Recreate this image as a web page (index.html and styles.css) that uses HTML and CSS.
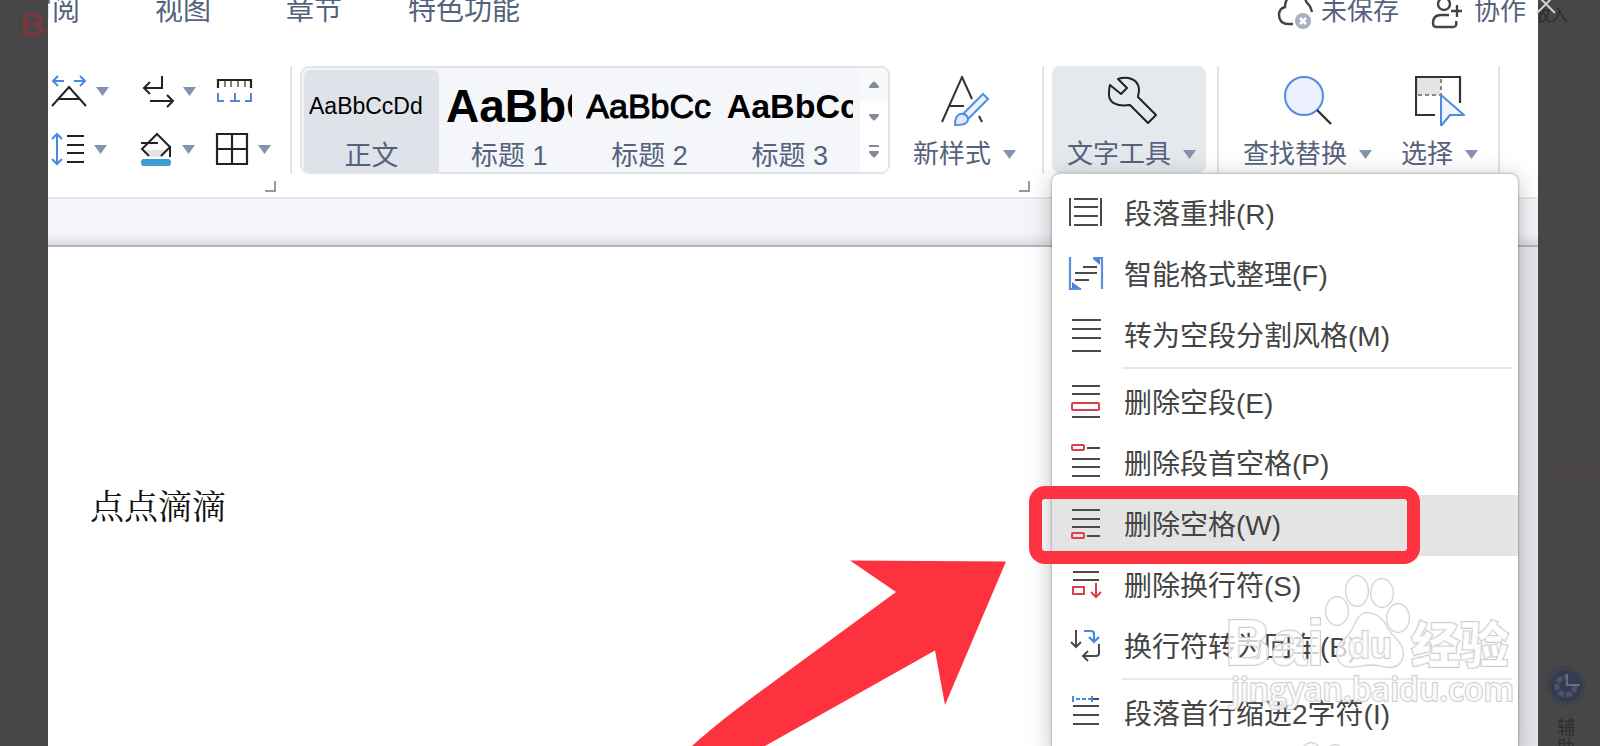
FILE: index.html
```html
<!DOCTYPE html>
<html lang="zh-CN">
<head>
<meta charset="utf-8">
<title>删除空格</title>
<link rel="stylesheet" href="styles.css">
</head>
<body>
<div class="viewer">
  <aside class="side side-left"><span class="side-logo">Bai</span></aside>

  <main class="app">
    <header class="topbar">
      <nav class="tabs">
        <button class="tab">审阅</button>
        <button class="tab">视图</button>
        <button class="tab">章节</button>
        <button class="tab tab-wide">特色功能</button>
      </nav>
      <div class="status">
        <button class="status-item status-save">
          <svg width="38" height="34" viewBox="0 0 38 34" fill="none"><path d="M16 28H11C5 28 2 24 2 19c0-4 2-7 6-8C8 3 13-2 19-2c6 0 9 4 11 9 3 2 4 5 5 9" stroke="#444" stroke-width="2.4"/><circle cx="26" cy="25" r="8" fill="#a9afbd"/><path d="M23 22l6 6M29 22l-6 6" stroke="#fff" stroke-width="2.6"/></svg>
          <span>未保存</span>
        </button>
        <button class="status-item status-share">
          <svg width="32" height="34" viewBox="0 0 32 34" fill="none" stroke="#444" stroke-width="2.4"><circle cx="13" cy="8" r="6"/><path d="M18 19H10C5 19 2 22 2 27c0 3 1 4 3 4h17c3 0 4-2 3-6M26 9v12M20 15h11"/></svg>
          <span>协作</span>
        </button>
      </div>
    </header>

    <section class="ribbon">
      <div class="group group-para">
        <div class="para-grid">
          <button class="small-btn" aria-label="字符缩放">
            <svg width="36" height="34" viewBox="0 0 36 34" fill="none" stroke-width="2"><path d="M1 32L18 13l17 19M7 25h22" stroke="#222"/><path d="M13 7H2M7 2L2 7l5 5M23 7h11M29 2l5 5-5 5" stroke="#4a88e0"/></svg>
            <svg class="caret" width="13" height="9" viewBox="0 0 13 9"><path d="M0 0h13L6.500 9z"/></svg>
          </button>
          <button class="small-btn" aria-label="换行">
            <svg width="34" height="34" viewBox="0 0 34 34" fill="none" stroke="#222" stroke-width="2"><path d="M22 2v12H4M10 8l-6 6 6 6M10 27h23M27 21l6 6-6 6"/></svg>
            <svg class="caret" width="13" height="9" viewBox="0 0 13 9"><path d="M0 0h13L6.500 9z"/></svg>
          </button>
          <button class="small-btn" aria-label="标尺">
            <svg width="38" height="28" viewBox="0 0 38 28" fill="none"><path d="M3 11V3h33v8" stroke="#222" stroke-width="2.200"/><path d="M10 4v6M16 4v6M23 4v6M30 4v6" stroke="#555" stroke-width="1.500"/><path d="M3 16v8h6M20 16v8M15 24h10M36 16v8h-6" stroke="#4f86e0" stroke-width="2"/></svg>
          </button>
          <button class="small-btn" aria-label="行距">
            <svg width="34" height="34" viewBox="0 0 34 34" fill="none" stroke-width="2"><path d="M6 2v30M1 7l5-5 5 5M1 27l5 5 5-5" stroke="#4a88e0"/><path d="M16 4h17M16 13h17M16 21h17M16 30h17" stroke="#222" stroke-width="2.200"/></svg>
            <svg class="caret" width="13" height="9" viewBox="0 0 13 9"><path d="M0 0h13L6.500 9z"/></svg>
          </button>
          <button class="small-btn" aria-label="底纹">
            <svg width="33" height="34" viewBox="0 0 33 34" fill="none"><path d="M4 18h24l-6 7H10z" fill="#e4e4e6"/><path d="M9 24l-7-7L17 2l13 13-9 9M1 11h17M30 14v11" stroke="#222" stroke-width="2"/><rect x="1" y="27" width="30" height="7" rx="3" fill="#3d9bd6"/></svg>
            <svg class="caret" width="13" height="9" viewBox="0 0 13 9"><path d="M0 0h13L6.500 9z"/></svg>
          </button>
          <button class="small-btn" aria-label="边框">
            <svg width="34" height="34" viewBox="0 0 34 34" fill="none" stroke="#222" stroke-width="2.200"><path d="M2 2h30v30H2zM17 2v30M2 17h30"/></svg>
            <svg class="caret" width="13" height="9" viewBox="0 0 13 9"><path d="M0 0h13L6.500 9z"/></svg>
          </button>
        </div>
        <span class="corner"></span>
      </div>

      <div class="group group-style">
        <div class="style-row">
          <div class="gallery">
            <button class="card card-on"><span class="sample sample-body">AaBbCcDd</span><span class="card-name">正文</span></button>
            <button class="card"><span class="sample sample-h1">AaBbC</span><span class="card-name">标题 1</span></button>
            <button class="card"><span class="sample sample-h2">AaBbCc</span><span class="card-name">标题 2</span></button>
            <button class="card"><span class="sample sample-h3">AaBbCc</span><span class="card-name">标题 3</span></button>
            <div class="scroller">
              <button class="scroll-btn scroll-up" aria-label="上一行"><svg width="10" height="7" viewBox="0 0 10 7"><path d="M0 6q0-1 4-5 1-1 2 0 4 4 4 5 0 1-1 1H1Q0 7 0 6z" fill="#838a97"/></svg></button>
              <button class="scroll-btn" aria-label="下一行"><svg width="10" height="7" viewBox="0 0 10 7"><path d="M0 1q0 1 4 5 1 1 2 0 4-4 4-5 0-1-1-1H1Q0 0 0 1z" fill="#838a97"/></svg></button>
              <button class="scroll-btn" aria-label="更多"><svg width="12" height="13" viewBox="0 0 12 13"><path d="M1 0h10v2H1zM1 7q0 1 4 5 1 1 2 0 4-4 4-5 0-1-1-1H2Q1 6 1 7z" fill="#838a97"/></svg></button>
            </div>
          </div>
          <button class="big-btn">
            <svg width="50" height="50" viewBox="0 0 50 50" fill="none"><path d="M2 46L22 1l10 22M10 30h14M39 40l3 6" stroke="#333" stroke-width="2"/><path d="M43 18l5 5-20 20-5-5z" fill="#edf3fd" stroke="#4f8fe8" stroke-width="2"/><path d="M15 49c0-8 3-12 8-11 5 1 6 5 4 8-2 3-6 3-12 3z" fill="#dfeafb" stroke="#4f8fe8" stroke-width="2"/></svg>
            <span class="big-label">新样式<svg class="caret" width="13" height="9" viewBox="0 0 13 9"><path d="M0 0h13L6.500 9z"/></svg></span>
          </button>
        </div>
        <span class="corner"></span>
      </div>

      <div class="group group-tool">
        <button class="big-btn big-btn-on" aria-expanded="true">
          <svg width="50" height="50" viewBox="0 0 50 50" fill="none"><path d="M3 9l11 9 6-6-9-9c8-3 20-1 21 10 0 4-1 6-1 8l18 18-8 8-18-18C9 31 2 26 2 19c0-4 0-7 1-10z" stroke="#222" stroke-width="2" stroke-linejoin="round"/></svg>
          <span class="big-label">文字工具<svg class="caret" width="13" height="9" viewBox="0 0 13 9"><path d="M0 0h13L6.500 9z"/></svg></span>
        </button>

        <div class="menu" role="menu">
          <button class="item" role="menuitem"><svg class="ico" viewBox="0 0 36 36"><path class="k" d="M2 4v28M33 4v28M6 5h24M6 13h24M6 22h24M6 31h24"/></svg>段落重排(R)</button>
          <button class="item" role="menuitem"><svg class="ico" viewBox="0 0 36 36"><path class="k" d="M15 12h14M7 18h22M7 25h14"/><path d="M2 2v32h11M25 3h9v31" fill="none" stroke="#5b8fdc" stroke-width="2.200"/><path d="M4 27v6h8zM25 4h7v6z" fill="#4a82d6"/></svg>智能格式整理(F)</button>
          <button class="item" role="menuitem"><svg class="ico" viewBox="0 0 36 36"><path class="k" d="M4 4h29M4 13h29M4 22h29M4 35h29"/></svg>转为空段分割风格(M)</button>
          <hr class="rule">
          <button class="item" role="menuitem"><svg class="ico" viewBox="0 0 36 36"><path class="k" d="M4 3h28M4 11h28M4 34h28"/><rect class="r" x="4" y="20" width="27" height="7" rx="1"/></svg>删除空段(E)</button>
          <button class="item" role="menuitem"><svg class="ico" viewBox="0 0 36 36"><path class="k" d="M19 4h13M4 15h28M4 23h28M4 32h28"/><rect class="r" x="4" y="1" width="12" height="5" rx="1"/></svg>删除段首空格(P)</button>
          <button class="item item-on" role="menuitem"><svg class="ico" viewBox="0 0 36 36"><path class="k" d="M4 5h28M4 14h28M4 22h28M19 31h13"/><rect class="r" x="4" y="28" width="12" height="5" rx="1"/></svg>删除空格(W)<span class="mark"></span></button>
          <button class="item" role="menuitem"><svg class="ico" viewBox="0 0 36 36"><path class="k" d="M5 6h26M5 14h26"/><path class="r" d="M28 17v14M23 26l5 5 5-5"/><rect class="r" x="5" y="21" width="11" height="7"/></svg>删除换行符(S)</button>
          <button class="item" role="menuitem"><svg class="ico" viewBox="0 0 36 36"><path class="k" d="M8 3v17M3 15l5 5 5-5M31 17v9q0 3-3 3H15M20 24l-5 5 5 5"/><path d="M16 4h7q3 0 3 3v8M21 10l5 5 5-5" fill="none" stroke="#4a88e0" stroke-width="2.200"/></svg>换行符转为回车(B)</button>
          <hr class="rule">
          <button class="item" role="menuitem"><svg class="ico" viewBox="0 0 36 36"><path class="k" d="M24 5h7M5 12h26M5 21h26M5 30h26"/><path d="M5 2v6M8 5h4M14 5h4M20 5h4M24 2v6" stroke="#4a88e0" stroke-width="2"/></svg>段落首行缩进2字符(I)</button>

          <svg class="watermark" width="300" height="190" viewBox="0 0 300 190">
            <g class="wm">
              <text class="wm-bai" x="4" y="103">Bai</text>
              <text class="wm-cn" x="190" y="101">经验</text>
              <ellipse cx="116" cy="49" rx="11" ry="14"/>
              <ellipse cx="136" cy="29" rx="11" ry="15"/>
              <ellipse cx="161" cy="31" rx="11" ry="14"/>
              <ellipse cx="177" cy="56" rx="11" ry="14"/>
              <path d="M146 51c10 0 17 7 20 15 5 9 16 14 16 25 0 10-7 15-16 14-8-2-15-3-22-2-9 2-21 4-26-4-5-9 0-18 8-24 8-7 9-24 20-24z"/>
              <text class="wm-du" x="127" y="96">du</text>
              <text class="wm-url" x="10" y="139">jingyan.baidu.com</text>
              <ellipse cx="90" cy="194" rx="10" ry="13"/>
              <ellipse cx="114" cy="196" rx="10" ry="13"/>
            </g>
          </svg>
        </div>
      </div>

      <div class="group group-find">
        <button class="big-btn">
          <svg width="50" height="50" viewBox="0 0 50 50" fill="none"><circle cx="21" cy="20" r="19" fill="#ebf0fc" stroke="#4f8be2" stroke-width="2"/><path d="M34 34l14 14" stroke="#333" stroke-width="2.400"/></svg>
          <span class="big-label">查找替换<svg class="caret" width="13" height="9" viewBox="0 0 13 9"><path d="M0 0h13L6.500 9z"/></svg></span>
        </button>
        <button class="big-btn">
          <svg width="50" height="50" viewBox="0 0 50 50" fill="none"><path d="M2 2h23v17H2z" fill="#e4e4e4"/><path d="M20 39H1V1h44v26" stroke="#333" stroke-width="2.200"/><path d="M26 3v16M3 19h22" stroke="#888" stroke-width="2" stroke-dasharray="4 3"/><path d="M26 19l23 20H35l-9 11z" fill="#f0f5fe" stroke="#4f8be2" stroke-width="2" stroke-linejoin="round"/></svg>
          <span class="big-label">选择<svg class="caret" width="13" height="9" viewBox="0 0 13 9"><path d="M0 0h13L6.500 9z"/></svg></span>
        </button>
      </div>
    </section>

    <div class="strip"></div>
    <section class="canvas">
      <article class="page">
        <p class="doc-text">点点滴滴</p>
        <svg class="arrow" width="320" height="190" viewBox="0 0 320 190"><path d="M164 4.500L320 5.500 259 149 249 94.500 79 190H6C28 170 60 146 90 124L210 36z" fill="#fe323f"/></svg>
      </article>
    </section>
  </main>

  <aside class="side side-right">
    <span class="side-word">收入</span>
    <button class="close" aria-label="关闭"><svg width="20" height="20" viewBox="0 0 20 20"><path d="M1 1l18 18M19 1L1 19" stroke="#d0d0d0" stroke-width="2"/></svg></button>
    <div class="side-line"></div>
    <div class="helper">
      <svg width="44" height="44" viewBox="0 0 44 44" fill="none"><circle cx="22" cy="22" r="20" fill="#424349"/><circle cx="22" cy="22" r="16" fill="#333c54"/><circle cx="22" cy="22" r="9" stroke="#4f5465" stroke-width="5" stroke-dasharray="6 2"/><path d="M23 6a15 15 0 0 1 14 15H23z" fill="#333c54"/><path d="M23 10v11h13" stroke="#6a6f80" stroke-width="2"/></svg>
      <span class="helper-text">辅助</span>
    </div>
  </aside>
</div>
</body>
</html>
```

FILE: styles.css
```css
* { box-sizing: border-box; }

body {
  margin: 0;
  background: #474747;
  font-family: "Liberation Sans", "Noto Sans CJK SC", sans-serif;
  overflow: hidden;
}

button {
  margin: 0;
  padding: 0;
  border: 0;
  background: none;
  color: inherit;
  font: inherit;
}

svg { display: block; flex: none; }

.viewer { display: flex; min-height: 100vh; }

.side { flex: none; overflow: hidden; background: #474747; }
.side-left { width: 48px; padding: 5px 0 0 20px; }
.side-right { position: relative; z-index: 1; width: 62px; overflow: visible; }

.side-logo {
  color: #743b3e;
  font-size: 34px;
  font-weight: 700;
  line-height: 38px;
}

.app {
  flex: 1;
  min-width: 0;
  display: flex;
  flex-direction: column;
  overflow: hidden;
  background: #fff;
}

/* top bar */
.topbar {
  display: flex;
  justify-content: space-between;
  align-items: flex-start;
  height: 70px;
  margin-top: -4px;
  padding-right: 12px;
  color: #56627d;
  line-height: 30px;
}

.tabs { display: flex; gap: 75px; margin-left: -24px; font-size: 28px; }
.tab { white-space: nowrap; }
.tab-wide { margin-left: -9px; }

.status { display: flex; gap: 32px; font-size: 26px; }
.status-item { display: flex; gap: 8px; white-space: nowrap; }
.status-save { gap: 6px; }
.status-share { gap: 11px; }

/* ribbon */
.ribbon {
  display: flex;
  align-items: flex-start;
  height: 133px;
  border-bottom: 2px solid #e6e7ea;
  color: #56627d;
}

.group {
  flex: none;
  display: flex;
  flex-direction: column;
}

.group-para { width: 242px; }

.para-grid {
  display: grid;
  grid-template-columns: 89px 75px 60px;
  grid-template-rows: 50px 66px;
  padding-left: 3px;
  height: 108px;
  align-items: center;
}

.small-btn { display: flex; align-items: center; gap: 9px; }
.caret { fill: #8592b0; }

.corner {
  align-self: flex-end;
  width: 11px;
  height: 11px;
  margin-top: 7px;
  border: solid #999;
  border-width: 0 2px 2px 0;
}

.group-para .corner,
.group-style .corner { margin-right: 14px; }

.style-row {
  display: flex;
  gap: 11px;
  height: 108px;
  padding: 0 14px 0 8px;
  border: solid #e4e6ea;
  border-width: 0 2px;
}

.gallery {
  display: flex;
  width: 590px;
  padding-left: 2px;
  border: 2px solid #e3e5ec;
  border-radius: 9px;
  background: #f4f6f9;
  overflow: hidden;
}

.card {
  flex: 1;
  display: flex;
  flex-direction: column;
  align-items: stretch;
  padding: 8px 7px 0;
  min-width: 0;
}

.card-on {
  flex: none;
  width: 135px;
  margin-top: 2px;
  padding: 6px 5px 0;
  border-radius: 6px 6px 0 0;
  background: #dfe3e9;
}

.sample {
  overflow: hidden;
  height: 60px;
  line-height: 60px;
  color: #000;
  text-align: left;
  white-space: nowrap;
}

.sample-body { font-size: 23px; }
.sample-h1 { font-size: 46px; font-weight: 700; }
.sample-h2 { font-size: 34px; -webkit-text-stroke: 1px #000; }
.sample-h3 { font-size: 34px; font-weight: 700; }

.card-name {
  margin-top: 4px;
  font-size: 27px;
  line-height: 32px;
  text-align: center;
  white-space: nowrap;
}

.scroller {
  flex: none;
  width: 28px;
  display: flex;
  flex-direction: column;
  padding-bottom: 4px;
  background: #fff;
}

.scroll-btn {
  flex: 1;
  display: flex;
  align-items: center;
  justify-content: center;
}

.scroll-up { background: #f8f9fb; }

.big-btn {
  display: flex;
  flex-direction: column;
  align-items: center;
  gap: 13px;
  height: 107px;
  padding: 10px 12px 0;
  border-radius: 8px;
}

.big-btn-on { padding: 10px 10px 0 15px; background: #e5e8ed; }

.big-label {
  display: flex;
  align-items: center;
  gap: 12px;
  font-size: 26px;
  line-height: 30px;
  white-space: nowrap;
}

.group-tool { position: relative; margin: 0 11px 0 8px; z-index: 2; }

.group-find {
  flex-direction: row;
  gap: 5px;
  padding: 0 8px 0 12px;
  border: solid #e1e3e8;
  border-width: 0 2px;
}

/* document */
.strip {
  height: 48px;
  border-bottom: 2px solid #b4b5bf;
  background: linear-gradient(#f4f5f8 75%, #dcdde2);
}

.canvas { flex: 1; padding-right: 60px; background: #e5e7ec; }

.page {
  position: relative;
  min-height: 499px;
  padding: 234px 42px 0;
  background: #fff;
}

.doc-text {
  margin: 0;
  color: #111;
  font-family: "Noto Serif CJK SC", "Songti SC", serif;
  font-size: 34px;
  line-height: 48px;
}

.arrow { position: absolute; left: 638px; top: 309px; }

/* drop-down menu */
.menu {
  position: absolute;
  left: 0;
  top: 108px;
  width: 466px;
  padding: 10px 0;
  border-radius: 8px;
  background: #fff;
  box-shadow: 0 0 3px rgba(0, 0, 0, .4), 0 4px 24px rgba(0, 0, 0, .25);
  color: #444;
}

.item {
  position: relative;
  display: flex;
  align-items: center;
  gap: 20px;
  width: 100%;
  height: 61px;
  padding: 0 0 6px 16px;
  font-size: 28px;
  white-space: nowrap;
}

.item-on { background: #e4e4e5; }

.ico { width: 36px; height: 36px; }
.k { fill: none; stroke: #4a4a4a; stroke-width: 2; }
.r { fill: none; stroke: #dc3f4c; stroke-width: 2; }

.rule {
  height: 2px;
  margin: 0 6px 4px 70px;
  border: 0;
  background: #e8e8ea;
}

.mark {
  position: absolute;
  left: -23px;
  top: -9px;
  bottom: -8px;
  width: 391px;
  border: 13px solid #fe3341;
  border-radius: 16px;
  pointer-events: none;
}

.watermark {
  position: absolute;
  left: 169px;
  top: 388px;
  pointer-events: none;
}

.wm {
  fill: rgba(255, 255, 255, .75);
  stroke: #cfcfcf;
  stroke-width: 2;
  paint-order: stroke;
  font-family: "Liberation Sans", sans-serif;
}

.wm-bai { font-size: 64px; font-weight: 700; }
.wm-du { font-size: 36px; font-weight: 700; }
.wm-cn { font-family: "Noto Sans CJK SC", sans-serif; font-size: 49px; font-weight: 900; }
.wm-url { font-family: "Open Sans", sans-serif; font-size: 32px; font-weight: 600; }

/* right side */
.side-word {
  position: absolute;
  left: 0;
  top: 3px;
  width: 30px;
  overflow: hidden;
  direction: rtl;
  color: #2c2c2c;
  font-size: 17px;
  line-height: 26px;
  white-space: nowrap;
}

.close { position: absolute; left: -2px; top: -6px; }

.side-line { height: 475px; border-bottom: 2px solid #583f3f; }

.helper {
  display: flex;
  flex-direction: column;
  align-items: center;
  gap: 10px;
  margin-top: 189px;
  height: 82px;
  overflow: hidden;
  padding-right: 6px;
}

.helper-text {
  width: 18px;
  color: #2e2e2e;
  font-size: 18px;
  line-height: 20px;
}
```
